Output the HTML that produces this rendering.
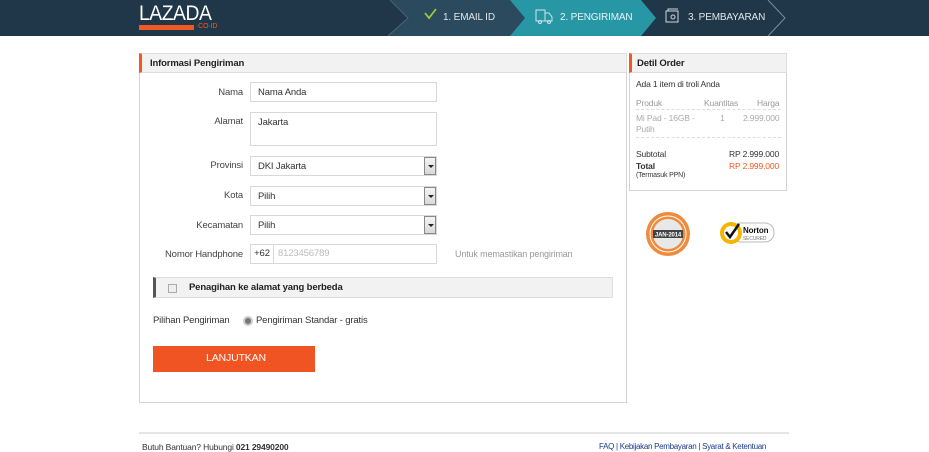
<!DOCTYPE html>
<html><head><style>
*{margin:0;padding:0;box-sizing:border-box}
body{width:929px;height:450px;overflow:hidden;background:#fff;font-family:"Liberation Sans",Arial,sans-serif;font-size:9.5px;letter-spacing:-0.15px;color:#333;position:relative}
.a{position:absolute}
.hdr{left:0;top:0;width:929px;height:36px;background:#1f3749}
.lbl{position:absolute;width:110px;text-align:right;left:133px;font-size:9.5px;color:#444}
.inp{position:absolute;left:250px;width:187px;border:1px solid #d8d8d8;background:#fff;font-size:9.5px;color:#333;padding:4px 7px;height:20px}
.sel .btn{position:absolute;right:0;top:0;width:12px;height:18px;background:linear-gradient(#f4f4f4,#d8d8d8);border:1px solid #888}
.sel .btn:after{content:"";position:absolute;left:3px;top:7px;border-left:3px solid transparent;border-right:3px solid transparent;border-top:3px solid #222}
</style></head><body>
<div class="a hdr"></div>
<svg class="a" style="left:0;top:0" width="929" height="36">
<polygon points="390,0 515,0 525,18 510,36 388,36 408,18" fill="#2b4a5d"/>
<polygon points="510,0 641,0 656,18 641,36 510,36 525,18" fill="#2797a6"/>
<polyline points="768,0 785,18 768,36" fill="none" stroke="#7a8c99" stroke-width="1"/>
<polyline points="390,0 408,18 388,36" fill="none" stroke="#4b6475" stroke-width="1"/>
<path d="M425 13 l4 5 l7 -9" fill="none" stroke="#9cc93a" stroke-width="1.8"/>
<g fill="none" stroke="#cfe6ea" stroke-width="1"><rect x="536" y="10" width="9" height="11"/><path d="M545 13h4l3 4v4h-7"/><circle cx="540" cy="22" r="1.5"/><circle cx="549" cy="22" r="1.5"/></g>
<g fill="none" stroke="#cfd6dc" stroke-width="1"><rect x="666" y="11" width="12" height="11"/><path d="M668 11v-2h10"/><circle cx="673" cy="17" r="2"/></g>
</svg>
<div class="a" style="left:139px;top:2px;font-size:21px;color:#fff;letter-spacing:-0.5px;transform:scaleX(0.92);transform-origin:left">LAZADA</div>
<div class="a" style="left:139px;top:25px;width:55px;height:5px;background:#f05a22"></div>
<div class="a" style="left:196px;top:23px;font-size:7px;color:#f05a22">·CO·ID</div>
<div class="a" style="left:443px;top:12px;font-size:10px;color:#dfe6ea">1. EMAIL ID</div>
<div class="a" style="left:560px;top:12px;font-size:10px;color:#e6f4f6">2. PENGIRIMAN</div>
<div class="a" style="left:688px;top:12px;font-size:10px;color:#dfe6ea">3. PEMBAYARAN</div>

<div class="a" style="left:139px;top:53px;width:488px;height:350px;border:1px solid #d4d4d4"></div>
<div class="a" style="left:139px;top:53px;width:488px;height:20px;background:#f2f2f2;border:1px solid #ddd;border-left:3px solid #f05a22;font-weight:bold;font-size:9.5px;padding:4px 0 0 8px;color:#222">Informasi Pengiriman</div>

<div class="lbl" style="top:87px">Nama</div><div class="inp" style="top:82px">Nama Anda</div>
<div class="lbl" style="top:116px">Alamat</div><div class="inp" style="top:112px;height:34px">Jakarta</div>
<div class="lbl" style="top:160px">Provinsi</div><div class="inp sel" style="top:156px">DKI Jakarta<div class="btn"></div></div>
<div class="lbl" style="top:190px">Kota</div><div class="inp sel" style="top:186px">Pilih<div class="btn"></div></div>
<div class="lbl" style="top:220px">Kecamatan</div><div class="inp sel" style="top:215px">Pilih<div class="btn"></div></div>
<div class="lbl" style="top:249px">Nomor Handphone</div>
<div class="inp" style="top:244px;padding:0"><span style="display:inline-block;width:23px;height:18px;border-right:1px solid #d8d8d8;text-align:center;line-height:18px">+62</span><span style="color:#bbb;padding-left:4px">8123456789</span></div>
<div class="a" style="left:455px;top:249px;color:#999;font-size:9px">Untuk memastikan pengiriman</div>

<div class="a" style="left:153px;top:277px;width:460px;height:21px;background:#f2f2f2;border:1px solid #ddd;border-left:3px solid #555;font-weight:bold;font-size:9.5px;padding:4px 0 0 33px;color:#222">Penagihan ke alamat yang berbeda</div>
<div class="a" style="left:168px;top:284px;width:9px;height:9px;border:1px solid #aaa;background:#eee"></div>
<div class="a" style="left:153px;top:315px">Pilihan Pengiriman</div>
<div class="a" style="left:243px;top:316px;width:10px;height:10px;border-radius:50%;background:#777;border:2px solid #ccc"></div>
<div class="a" style="left:256px;top:315px">Pengiriman Standar - gratis</div>
<div class="a" style="left:153px;top:346px;width:162px;height:26px;background:#f05423;color:#fff;font-size:10.5px;padding:6px 0 0 53px">LANJUTKAN</div>

<div class="a" style="left:629px;top:53px;width:158px;height:138px;border:1px solid #d4d4d4"></div>
<div class="a" style="left:629px;top:53px;width:158px;height:20px;background:#f2f2f2;border:1px solid #ddd;border-left:3px solid #f05a22;font-weight:bold;padding:4px 0 0 5px;color:#222">Detil Order</div>
<div class="a" style="left:636px;top:79px;font-size:8.5px">Ada 1 item di troli Anda</div>
<div class="a" style="left:636px;top:98px;font-size:8.5px;color:#999">Produk</div>
<div class="a" style="left:704px;top:98px;font-size:8.5px;color:#999">Kuantitas</div>
<div class="a" style="left:757px;top:98px;font-size:8.5px;color:#999">Harga</div>
<div class="a" style="left:636px;top:109px;width:145px;border-top:1px dashed #ddd"></div>
<div class="a" style="left:636px;top:113px;font-size:8.5px;color:#aaa;line-height:11px">Mi Pad - 16GB -<br>Putih</div>
<div class="a" style="left:720px;top:113px;font-size:8.5px;color:#aaa">1</div>
<div class="a" style="left:743px;top:113px;font-size:8.5px;color:#aaa">2.999.000</div>
<div class="a" style="left:636px;top:137px;width:145px;border-top:1px dashed #ddd"></div>
<div class="a" style="left:636px;top:149px;font-size:8.5px">Subtotal</div>
<div class="a" style="left:729px;top:149px;font-size:8.5px">RP 2.999.000</div>
<div class="a" style="left:636px;top:161px;font-size:8.5px;font-weight:bold">Total</div>
<div class="a" style="left:729px;top:161px;font-size:8.5px;color:#f05a22">RP 2.999.000</div>
<div class="a" style="left:636px;top:172px;font-size:7px">(Termasuk PPN)</div>

<svg class="a" style="left:645px;top:210px" width="46" height="52"><circle cx="23" cy="24" r="22" fill="#f08a3c"/><circle cx="23" cy="24" r="18" fill="none" stroke="#fff" stroke-width="1"/><circle cx="23" cy="24" r="15" fill="#e8e8e8"/><rect x="8" y="20" width="30" height="8" fill="#444"/><text x="23" y="26.5" font-size="6" fill="#fff" text-anchor="middle" font-family="Liberation Sans" font-weight="bold">JAN-2014</text></svg>
<svg class="a" style="left:718px;top:220px" width="58" height="26"><rect x="14" y="3" width="42" height="19" rx="9" fill="#fff" stroke="#bbb"/><circle cx="13" cy="13" r="11" fill="#f5b400"/><circle cx="13" cy="13" r="7" fill="#fff"/><path d="M8 12l4 5 9-13" fill="none" stroke="#111" stroke-width="2.5"/><text x="25" y="13" font-size="8" font-weight="bold" font-family="Liberation Sans" fill="#111">Norton</text><text x="25" y="20" font-size="5" font-family="Liberation Sans" fill="#777">SECURED</text></svg>

<div class="a" style="left:139px;top:432px;width:650px;border-top:2px solid #e5e5e5"></div>
<div class="a" style="left:142px;top:442px;font-size:8.5px">Butuh Bantuan? Hubungi <b>021 29490200</b></div>
<div class="a" style="left:599px;top:442px;font-size:8px;letter-spacing:-0.3px;color:#1a3a8a">FAQ | Kebijakan Pembayaran | Syarat &amp; Ketentuan</div>
</body></html>
